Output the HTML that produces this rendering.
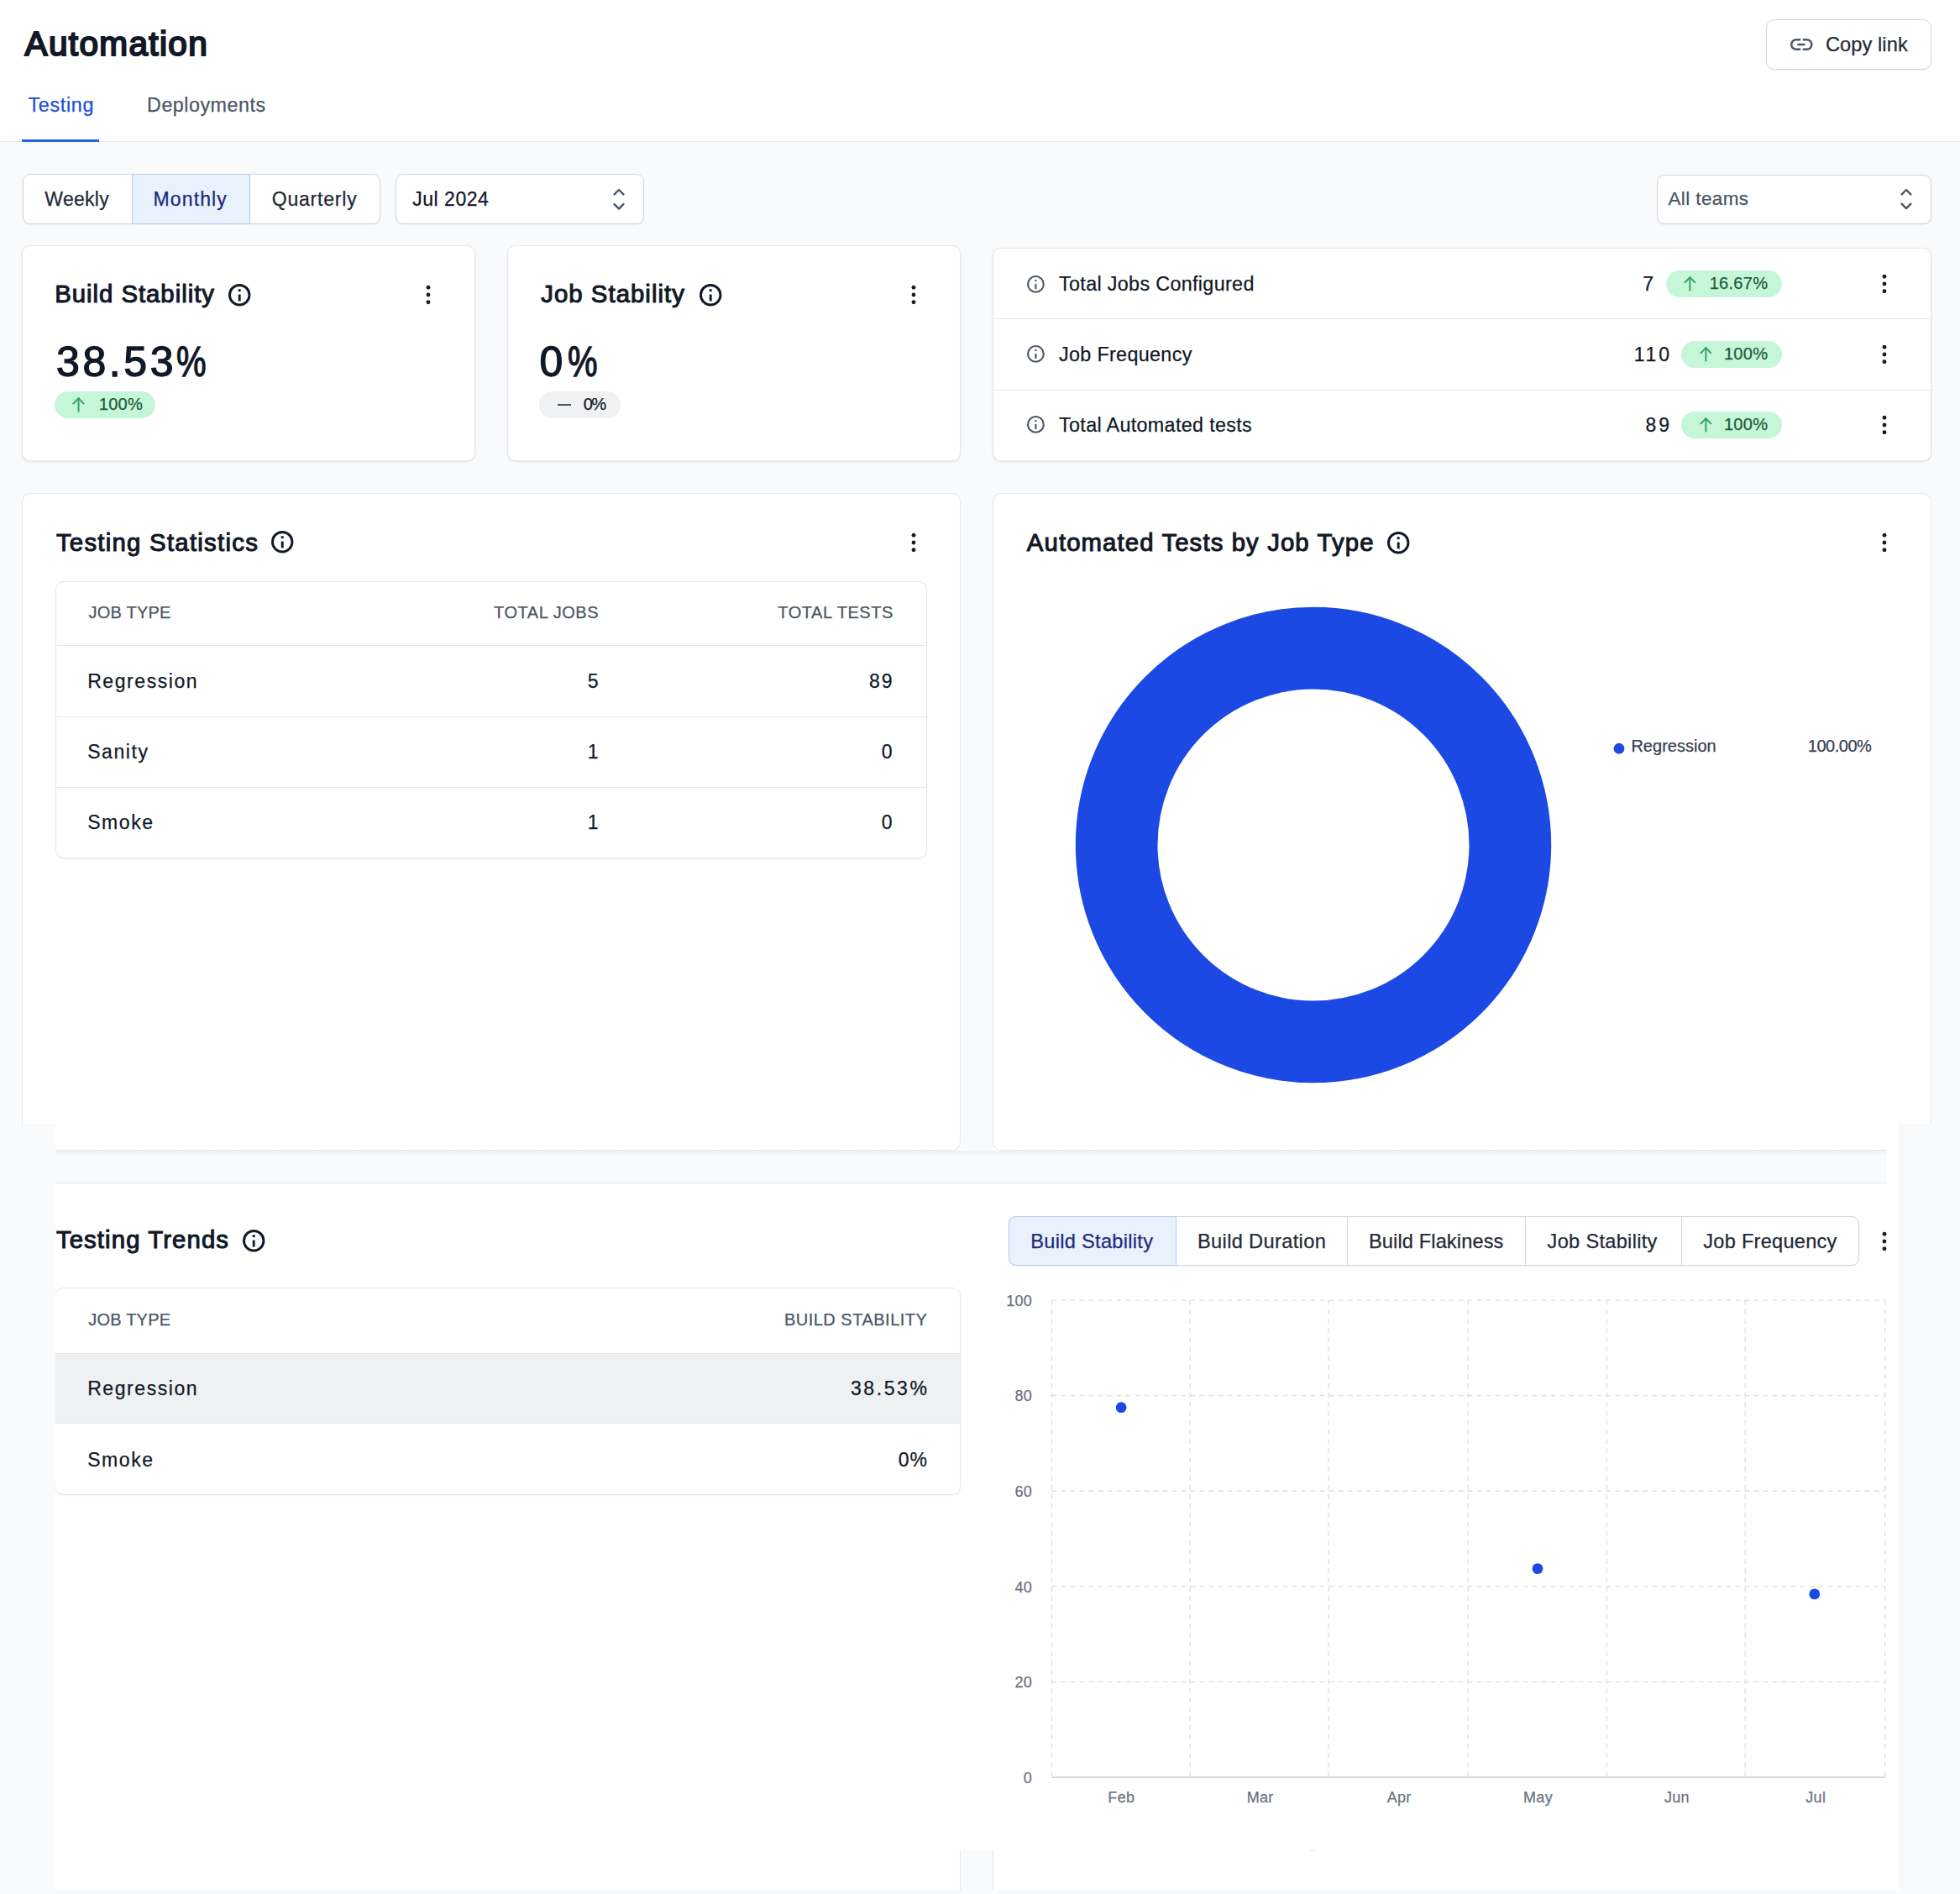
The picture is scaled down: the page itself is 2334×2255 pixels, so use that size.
<!DOCTYPE html>
<html><head><meta charset="utf-8">
<style>
*{box-sizing:border-box;margin:0;padding:0}
html,body{width:2334px;height:2255px;overflow:hidden}
body{position:relative;background:#f9fafb;font-family:"Liberation Sans",sans-serif;color:#111827}
.a{position:absolute}
.t{position:absolute;white-space:nowrap;line-height:1;-webkit-text-stroke:0.25px currentColor}
svg{position:absolute;overflow:visible}
</style></head><body>
<div class="a" style="left:0.00px;top:0.00px;width:2334.00px;height:169.00px;background:#fff;border-bottom:1px solid #e5e7eb"></div>
<div class="t" style="left:29.50px;top:32.22px;font-size:40.50px;letter-spacing:1.38px;color:#111827;-webkit-text-stroke:2.1px currentColor">Automation</div>
<div class="t" style="left:33.40px;top:113.78px;font-size:23.30px;letter-spacing:0.70px;color:#1d4ed8;">Testing</div>
<div class="t" style="left:175.10px;top:113.78px;font-size:23.30px;letter-spacing:0.50px;color:#4b5563;">Deployments</div>
<div class="a" style="left:26.00px;top:166.00px;width:92.00px;height:3.00px;background:#2563eb"></div>
<div class="a" style="left:2103.00px;top:23.00px;width:197.00px;height:59.50px;background:#fff;border:1px solid #d1d5db;border-radius:10px;box-shadow:0 1px 2px rgba(0,0,0,.05)"></div>
<svg style="left:2130px;top:43px" width="30" height="20" viewBox="0 0 30 20"><g fill="none" stroke="#4b5563" stroke-width="2.4"><path d="M14.2 4.2H9a5.8 5.8 0 0 0 0 11.6h5.2"/><path d="M16.8 4.2H21.6a5.8 5.8 0 0 1 0 11.6h-4.8"/><path d="M11.4 10h7.1" stroke-linecap="round"/></g></svg>
<div class="t" style="left:2173.90px;top:41.72px;font-size:23.60px;letter-spacing:0.10px;color:#1f2937;">Copy link</div>
<div class="a" style="left:26.50px;top:207.00px;width:426.00px;height:59.50px;background:#fff;border:1px solid #d1d5db;border-radius:9px;box-shadow:0 1px 2px rgba(0,0,0,.05);"></div>
<div class="a" style="left:157.00px;top:207.00px;width:141.00px;height:59.50px;background:#e9f1fd;border:1px solid #b3cbea"></div>
<div class="t" style="left:53.30px;top:226.13px;font-size:23.00px;letter-spacing:0.30px;color:#1f2937;">Weekly</div>
<div class="t" style="left:182.60px;top:226.13px;font-size:23.00px;letter-spacing:1.10px;color:#1c2a7a;">Monthly</div>
<div class="t" style="left:323.70px;top:226.13px;font-size:23.00px;letter-spacing:0.80px;color:#1f2937;">Quarterly</div>
<div class="a" style="left:471.00px;top:207.00px;width:296.00px;height:59.50px;background:#fff;border:1px solid #d1d5db;border-radius:9px;box-shadow:0 1px 2px rgba(0,0,0,.05);"></div>
<div class="t" style="left:491.30px;top:226.13px;font-size:23.00px;letter-spacing:0.50px;color:#111827;">Jul 2024</div>
<svg style="left:727.00px;top:221.70px" width="20" height="30.60"><g fill="none" stroke="#4b5563" stroke-width="2.4" stroke-linecap="round" stroke-linejoin="round"><path d="M4.60 9.40L10 4L15.40 9.40"/><path d="M4.60 21.20L10 26.60L15.40 21.20"/></g></svg>
<div class="a" style="left:1972.50px;top:207.50px;width:327.50px;height:59.00px;background:#fff;border:1px solid #d1d5db;border-radius:9px;box-shadow:0 1px 2px rgba(0,0,0,.05);"></div>
<div class="t" style="left:1986.40px;top:226.45px;font-size:22.50px;letter-spacing:0.40px;color:#4b5563;">All teams</div>
<svg style="left:2259.80px;top:221.90px" width="20" height="30.10"><g fill="none" stroke="#4b5563" stroke-width="2.4" stroke-linecap="round" stroke-linejoin="round"><path d="M4.60 9.40L10 4L15.40 9.40"/><path d="M4.60 20.70L10 26.10L15.40 20.70"/></g></svg>
<div class="a" style="left:25.80px;top:291.70px;width:540.50px;height:257.10px;background:#fff;border:1px solid #e5e7eb;border-radius:10px;box-shadow:0 1px 3px rgba(0,0,0,.07),0 1px 2px rgba(0,0,0,.04);"></div>
<div class="t" style="left:65.20px;top:335.20px;font-size:29.30px;letter-spacing:0.99px;color:#111827;-webkit-text-stroke:1.05px currentColor">Build Stability</div>
<svg style="left:268.90px;top:334.60px" width="32.40" height="32.40"><circle cx="16.20" cy="16.20" r="11.75" fill="none" stroke="#111827" stroke-width="2.9"/><line x1="16.20" y1="15.54" x2="16.20" y2="23.46" stroke="#111827" stroke-width="2.90"/><rect x="14.75" y="9.21" width="2.90" height="2.90" fill="#111827"/></svg>
<svg style="left:499.60px;top:331.00px" width="20" height="40"><circle cx="10" cy="11.25" r="2.45" fill="#1c1d22"/><circle cx="10" cy="20.00" r="2.45" fill="#1c1d22"/><circle cx="10" cy="28.75" r="2.45" fill="#1c1d22"/></svg>
<div class="t" style="left:67.00px;top:405.98px;font-size:50.00px;letter-spacing:3.60px;color:#111827;-webkit-text-stroke:1.3px currentColor">38.53<span style="display:inline-block;transform:scaleX(0.8);transform-origin:0 0">%</span></div>
<div class="a" style="left:65.40px;top:466.00px;width:120.00px;height:31.50px;background:#c6f6d8;border-radius:16px"></div>
<svg style="left:86.00px;top:473.00px" width="15.00" height="17.50"><g fill="none" stroke="#2f9e62" stroke-width="1.9" stroke-linecap="butt" stroke-linejoin="miter"><path d="M7.50 17.50V0.76"/><path d="M0.95 8.07L7.50 1.14L14.05 8.07"/></g></svg>
<div class="t" style="left:117.80px;top:470.89px;font-size:20.10px;letter-spacing:0.20px;color:#1d5a3c;">100%</div>
<div class="a" style="left:603.90px;top:291.70px;width:539.80px;height:257.10px;background:#fff;border:1px solid #e5e7eb;border-radius:10px;box-shadow:0 1px 3px rgba(0,0,0,.07),0 1px 2px rgba(0,0,0,.04);"></div>
<div class="t" style="left:644.30px;top:335.20px;font-size:29.30px;letter-spacing:1.05px;color:#111827;-webkit-text-stroke:1.05px currentColor">Job Stability</div>
<svg style="left:829.50px;top:334.60px" width="32.40" height="32.40"><circle cx="16.20" cy="16.20" r="11.75" fill="none" stroke="#111827" stroke-width="2.9"/><line x1="16.20" y1="15.54" x2="16.20" y2="23.46" stroke="#111827" stroke-width="2.90"/><rect x="14.75" y="9.21" width="2.90" height="2.90" fill="#111827"/></svg>
<svg style="left:1078.00px;top:331.00px" width="20" height="40"><circle cx="10" cy="11.25" r="2.45" fill="#1c1d22"/><circle cx="10" cy="20.00" r="2.45" fill="#1c1d22"/><circle cx="10" cy="28.75" r="2.45" fill="#1c1d22"/></svg>
<div class="t" style="left:642.50px;top:405.98px;font-size:50.00px;letter-spacing:5.50px;color:#111827;-webkit-text-stroke:1.3px currentColor">0<span style="display:inline-block;transform:scaleX(0.8);transform-origin:0 0">%</span></div>
<div class="a" style="left:642.20px;top:466.00px;width:96.70px;height:31.50px;background:#f0f1f3;border-radius:16px"></div>
<div class="a" style="left:664.20px;top:481.00px;width:15.40px;height:2.00px;background:#4b5563"></div>
<div class="t" style="left:694.80px;top:470.89px;font-size:20.10px;letter-spacing:-1.70px;color:#111827;">0%</div>
<div class="a" style="left:1181.80px;top:294.80px;width:1118.30px;height:254.00px;background:#fff;border:1px solid #e5e7eb;border-radius:10px;box-shadow:0 1px 3px rgba(0,0,0,.07),0 1px 2px rgba(0,0,0,.04);"></div>
<div class="a" style="left:1183.50px;top:379.00px;width:1115.50px;height:1.00px;background:#e5e7eb"></div>
<div class="a" style="left:1183.50px;top:464.00px;width:1115.50px;height:1.00px;background:#e5e7eb"></div>
<svg style="left:1220.30px;top:324.50px" width="26.80" height="26.80"><circle cx="13.40" cy="13.40" r="9.35" fill="none" stroke="#4b5563" stroke-width="2.1"/><line x1="13.40" y1="12.88" x2="13.40" y2="19.12" stroke="#4b5563" stroke-width="2.10"/><rect x="12.35" y="7.98" width="2.10" height="2.10" fill="#4b5563"/></svg>
<div class="t" style="left:1261.00px;top:326.98px;font-size:23.30px;letter-spacing:0.35px;color:#111827;">Total Jobs Configured</div>
<div class="t" style="left:471.90px;width:1500px;text-align:right;top:327.23px;font-size:23.00px;letter-spacing:2.80px;color:#111827;">7</div>
<div class="a" style="left:1983.90px;top:322.10px;width:138.20px;height:31.60px;background:#c6f6d8;border-radius:16px"></div>
<svg style="left:2005.30px;top:329.10px" width="14.80" height="17.40"><g fill="none" stroke="#2f9e62" stroke-width="1.9" stroke-linecap="butt" stroke-linejoin="miter"><path d="M7.40 17.40V0.76"/><path d="M0.95 7.97L7.40 1.14L13.85 7.97"/></g></svg>
<div class="t" style="left:605.35px;width:1500px;text-align:right;top:326.99px;font-size:20.10px;letter-spacing:0.25px;color:#1d5a3c;">16.67%</div>
<svg style="left:2234.00px;top:317.90px" width="20" height="40"><circle cx="10" cy="11.25" r="2.45" fill="#1c1d22"/><circle cx="10" cy="20.00" r="2.45" fill="#1c1d22"/><circle cx="10" cy="28.75" r="2.45" fill="#1c1d22"/></svg>
<svg style="left:1220.30px;top:408.40px" width="26.80" height="26.80"><circle cx="13.40" cy="13.40" r="9.35" fill="none" stroke="#4b5563" stroke-width="2.1"/><line x1="13.40" y1="12.88" x2="13.40" y2="19.12" stroke="#4b5563" stroke-width="2.10"/><rect x="12.35" y="7.98" width="2.10" height="2.10" fill="#4b5563"/></svg>
<div class="t" style="left:1261.00px;top:410.88px;font-size:23.30px;letter-spacing:0.35px;color:#111827;">Job Frequency</div>
<div class="t" style="left:490.80px;width:1500px;text-align:right;top:411.13px;font-size:23.00px;letter-spacing:2.80px;color:#111827;">110</div>
<div class="a" style="left:2002.30px;top:406.00px;width:119.80px;height:31.60px;background:#c6f6d8;border-radius:16px"></div>
<svg style="left:2023.70px;top:413.00px" width="14.80" height="17.40"><g fill="none" stroke="#2f9e62" stroke-width="1.9" stroke-linecap="butt" stroke-linejoin="miter"><path d="M7.40 17.40V0.76"/><path d="M0.95 7.97L7.40 1.14L13.85 7.97"/></g></svg>
<div class="t" style="left:605.35px;width:1500px;text-align:right;top:410.89px;font-size:20.10px;letter-spacing:0.25px;color:#1d5a3c;">100%</div>
<svg style="left:2234.00px;top:401.80px" width="20" height="40"><circle cx="10" cy="11.25" r="2.45" fill="#1c1d22"/><circle cx="10" cy="20.00" r="2.45" fill="#1c1d22"/><circle cx="10" cy="28.75" r="2.45" fill="#1c1d22"/></svg>
<svg style="left:1220.30px;top:492.40px" width="26.80" height="26.80"><circle cx="13.40" cy="13.40" r="9.35" fill="none" stroke="#4b5563" stroke-width="2.1"/><line x1="13.40" y1="12.88" x2="13.40" y2="19.12" stroke="#4b5563" stroke-width="2.10"/><rect x="12.35" y="7.98" width="2.10" height="2.10" fill="#4b5563"/></svg>
<div class="t" style="left:1261.00px;top:494.88px;font-size:23.30px;letter-spacing:0.35px;color:#111827;">Total Automated tests</div>
<div class="t" style="left:490.80px;width:1500px;text-align:right;top:495.13px;font-size:23.00px;letter-spacing:2.80px;color:#111827;">89</div>
<div class="a" style="left:2002.30px;top:490.00px;width:119.80px;height:31.60px;background:#c6f6d8;border-radius:16px"></div>
<svg style="left:2023.70px;top:497.00px" width="14.80" height="17.40"><g fill="none" stroke="#2f9e62" stroke-width="1.9" stroke-linecap="butt" stroke-linejoin="miter"><path d="M7.40 17.40V0.76"/><path d="M0.95 7.97L7.40 1.14L13.85 7.97"/></g></svg>
<div class="t" style="left:605.35px;width:1500px;text-align:right;top:494.89px;font-size:20.10px;letter-spacing:0.25px;color:#1d5a3c;">100%</div>
<svg style="left:2234.00px;top:485.80px" width="20" height="40"><circle cx="10" cy="11.25" r="2.45" fill="#1c1d22"/><circle cx="10" cy="20.00" r="2.45" fill="#1c1d22"/><circle cx="10" cy="28.75" r="2.45" fill="#1c1d22"/></svg>
<div class="a" style="left:25.60px;top:587.00px;width:1118.30px;height:751.00px;background:#fff;border:1px solid #e5e7eb;border-radius:10px;box-shadow:0 1px 3px rgba(0,0,0,.07),0 1px 2px rgba(0,0,0,.04);border-bottom:none;border-bottom-left-radius:0;border-bottom-right-radius:0;box-shadow:none"></div>
<div class="t" style="left:66.90px;top:630.50px;font-size:29.30px;letter-spacing:1.28px;color:#111827;-webkit-text-stroke:1.05px currentColor">Testing Statistics</div>
<svg style="left:319.80px;top:629.30px" width="32.40" height="32.40"><circle cx="16.20" cy="16.20" r="11.75" fill="none" stroke="#111827" stroke-width="2.9"/><line x1="16.20" y1="15.54" x2="16.20" y2="23.46" stroke="#111827" stroke-width="2.90"/><rect x="14.75" y="9.21" width="2.90" height="2.90" fill="#111827"/></svg>
<svg style="left:1078.00px;top:626.00px" width="20" height="40"><circle cx="10" cy="11.25" r="2.45" fill="#1c1d22"/><circle cx="10" cy="20.00" r="2.45" fill="#1c1d22"/><circle cx="10" cy="28.75" r="2.45" fill="#1c1d22"/></svg>
<div class="a" style="left:65.70px;top:691.60px;width:1038.00px;height:330.00px;background:#fff;border:1px solid #e5e7eb;border-radius:10px;box-shadow:0 1px 2px rgba(0,0,0,.05)"></div>
<div class="a" style="left:66.70px;top:768.00px;width:1036.00px;height:1.00px;background:#e5e7eb"></div>
<div class="a" style="left:66.70px;top:853.20px;width:1036.00px;height:1.00px;background:#e5e7eb"></div>
<div class="a" style="left:66.70px;top:937.20px;width:1036.00px;height:1.00px;background:#e5e7eb"></div>
<div class="t" style="left:105.60px;top:718.87px;font-size:20.00px;letter-spacing:0.20px;color:#4b5563;">JOB TYPE</div>
<div class="t" style="left:-786.85px;width:1500px;text-align:right;top:718.87px;font-size:20.00px;letter-spacing:0.55px;color:#4b5563;">TOTAL JOBS</div>
<div class="t" style="left:-436.15px;width:1500px;text-align:right;top:718.87px;font-size:20.00px;letter-spacing:0.55px;color:#4b5563;">TOTAL TESTS</div>
<div class="t" style="left:104.20px;top:800.03px;font-size:23.00px;letter-spacing:1.57px;color:#111827;">Regression</div>
<div class="t" style="left:-785.40px;width:1500px;text-align:right;top:800.03px;font-size:23.00px;letter-spacing:2.00px;color:#111827;">5</div>
<div class="t" style="left:-435.50px;width:1500px;text-align:right;top:800.03px;font-size:23.00px;letter-spacing:2.00px;color:#111827;">89</div>
<div class="t" style="left:104.20px;top:884.23px;font-size:23.00px;letter-spacing:1.57px;color:#111827;">Sanity</div>
<div class="t" style="left:-785.40px;width:1500px;text-align:right;top:884.23px;font-size:23.00px;letter-spacing:2.00px;color:#111827;">1</div>
<div class="t" style="left:-435.50px;width:1500px;text-align:right;top:884.23px;font-size:23.00px;letter-spacing:2.00px;color:#111827;">0</div>
<div class="t" style="left:104.20px;top:968.13px;font-size:23.00px;letter-spacing:1.57px;color:#111827;">Smoke</div>
<div class="t" style="left:-785.40px;width:1500px;text-align:right;top:968.13px;font-size:23.00px;letter-spacing:2.00px;color:#111827;">1</div>
<div class="t" style="left:-435.50px;width:1500px;text-align:right;top:968.13px;font-size:23.00px;letter-spacing:2.00px;color:#111827;">0</div>
<div class="a" style="left:1182.20px;top:587.30px;width:1117.90px;height:750.70px;background:#fff;border:1px solid #e5e7eb;border-radius:10px;box-shadow:0 1px 3px rgba(0,0,0,.07),0 1px 2px rgba(0,0,0,.04);border-bottom:none;border-bottom-left-radius:0;border-bottom-right-radius:0;box-shadow:none"></div>
<div class="t" style="left:1222.80px;top:630.50px;font-size:29.30px;letter-spacing:1.13px;color:#111827;-webkit-text-stroke:1.05px currentColor">Automated Tests by Job Type</div>
<svg style="left:1648.80px;top:629.60px" width="32.40" height="32.40"><circle cx="16.20" cy="16.20" r="11.75" fill="none" stroke="#111827" stroke-width="2.9"/><line x1="16.20" y1="15.54" x2="16.20" y2="23.46" stroke="#111827" stroke-width="2.90"/><rect x="14.75" y="9.21" width="2.90" height="2.90" fill="#111827"/></svg>
<svg style="left:2233.80px;top:626.00px" width="20" height="40"><circle cx="10" cy="11.25" r="2.45" fill="#1c1d22"/><circle cx="10" cy="20.00" r="2.45" fill="#1c1d22"/><circle cx="10" cy="28.75" r="2.45" fill="#1c1d22"/></svg>
<svg style="left:1263.8px;top:706.4px" width="600" height="600"><circle cx="300" cy="300" r="234.35" fill="none" stroke="#1c49e4" stroke-width="97.7"/></svg>
<svg style="left:1918px;top:881px" width="20" height="20"><circle cx="10" cy="10.2" r="6.4" fill="#1c49e4"/></svg>
<div class="t" style="left:1942.40px;top:877.97px;font-size:20.00px;letter-spacing:0.02px;color:#374151;">Regression</div>
<div class="t" style="left:728.30px;width:1500px;text-align:right;top:877.97px;font-size:20.00px;letter-spacing:-0.50px;color:#374151;">100.00%</div>
<div class="a" style="left:0.00px;top:1338.00px;width:65.70px;height:917.00px;background:#f9fafb"></div>
<div class="a" style="left:65.70px;top:1338.00px;width:2195.30px;height:913.00px;background:#fff"></div>
<div class="a" style="left:65.70px;top:1338.00px;width:1078.20px;height:31.80px;background:#fff;border-right:1px solid #e5e7eb;border-bottom:1px solid #e5e7eb;border-bottom-right-radius:10px"></div>
<div class="a" style="left:1143.90px;top:1338.00px;width:38.30px;height:31.80px;background:#f9fafb"></div>
<div class="a" style="left:1182.20px;top:1338.00px;width:1064.80px;height:31.80px;background:#fff;border-left:1px solid #e5e7eb;border-bottom:1px solid #e5e7eb;border-bottom-left-radius:10px"></div>
<div class="a" style="left:65.70px;top:1369.80px;width:2181.30px;height:39.10px;background:#f9fafb;border-bottom:1px solid #e5e7eb"></div>
<div class="a" style="left:65.7px;top:1369.8px;width:2181px;height:6px;background:linear-gradient(rgba(0,0,0,.035),rgba(0,0,0,0))"></div>
<div class="t" style="left:66.90px;top:1461.30px;font-size:29.30px;letter-spacing:1.12px;color:#111827;-webkit-text-stroke:1.05px currentColor">Testing Trends</div>
<svg style="left:285.50px;top:1461.30px" width="32.40" height="32.40"><circle cx="16.20" cy="16.20" r="11.75" fill="none" stroke="#111827" stroke-width="2.9"/><line x1="16.20" y1="15.54" x2="16.20" y2="23.46" stroke="#111827" stroke-width="2.90"/><rect x="14.75" y="9.21" width="2.90" height="2.90" fill="#111827"/></svg>
<div class="a" style="left:64.60px;top:1533.00px;width:1079.70px;height:247.00px;background:#fff;border:1px solid #e5e7eb;border-radius:10px;box-shadow:0 1px 2px rgba(0,0,0,.05)"></div>
<div class="a" style="left:66.00px;top:1611.00px;width:1077.30px;height:84.00px;background:#eff0f2;border-top:1px solid #e5e7eb;border-bottom:1px solid #e5e7eb"></div>
<div class="t" style="left:105.30px;top:1560.97px;font-size:20.00px;letter-spacing:0.20px;color:#4b5563;">JOB TYPE</div>
<div class="t" style="left:-395.60px;width:1500px;text-align:right;top:1560.97px;font-size:20.00px;letter-spacing:0.50px;color:#4b5563;">BUILD STABILITY</div>
<div class="t" style="left:104.20px;top:1642.23px;font-size:23.00px;letter-spacing:1.57px;color:#111827;">Regression</div>
<div class="t" style="left:-393.52px;width:1500px;text-align:right;top:1642.23px;font-size:23.00px;letter-spacing:2.58px;color:#111827;">38.53%</div>
<div class="t" style="left:104.20px;top:1727.23px;font-size:23.00px;letter-spacing:1.57px;color:#111827;">Smoke</div>
<div class="t" style="left:-395.10px;width:1500px;text-align:right;top:1727.23px;font-size:23.00px;letter-spacing:1.00px;color:#111827;">0%</div>
<div class="a" style="left:1201.40px;top:1448.30px;width:1012.90px;height:58.30px;background:#fff;border:1px solid #d1d5db;border-radius:9px;box-shadow:0 1px 2px rgba(0,0,0,.05)"></div>
<div class="a" style="left:1201.40px;top:1448.30px;width:200.10px;height:58.30px;background:#e9f1fd;border:1px solid #b3cbea;border-radius:9px 0 0 9px"></div>
<div class="a" style="left:1604.20px;top:1449.30px;width:1.00px;height:56.30px;background:#d1d5db"></div>
<div class="a" style="left:1816.10px;top:1449.30px;width:1.00px;height:56.30px;background:#d1d5db"></div>
<div class="a" style="left:2002.40px;top:1449.30px;width:1.00px;height:56.30px;background:#d1d5db"></div>
<div class="t" style="left:1227.20px;top:1467.12px;font-size:23.60px;letter-spacing:0.30px;color:#1c2a7a;">Build Stability</div>
<div class="t" style="left:1426.00px;top:1467.12px;font-size:23.60px;letter-spacing:0.35px;color:#1f2937;">Build Duration</div>
<div class="t" style="left:1630.00px;top:1467.12px;font-size:23.60px;letter-spacing:0.12px;color:#1f2937;">Build Flakiness</div>
<div class="t" style="left:1842.60px;top:1467.12px;font-size:23.60px;letter-spacing:0.30px;color:#1f2937;">Job Stability</div>
<div class="t" style="left:2028.30px;top:1467.12px;font-size:23.60px;letter-spacing:0.25px;color:#1f2937;">Job Frequency</div>
<svg style="left:2234.00px;top:1458.00px" width="20" height="40"><circle cx="10" cy="11.25" r="2.45" fill="#1c1d22"/><circle cx="10" cy="20.00" r="2.45" fill="#1c1d22"/><circle cx="10" cy="28.75" r="2.45" fill="#1c1d22"/></svg>
<svg style="left:0;top:0" width="2334" height="2255"><g stroke="#dddddf" stroke-width="1.3" stroke-dasharray="6 5" fill="none"><line x1="1252.50" y1="1548.10" x2="1252.50" y2="2116.00"/><line x1="1417.20" y1="1548.10" x2="1417.20" y2="2116.00"/><line x1="1582.20" y1="1548.10" x2="1582.20" y2="2116.00"/><line x1="1748.20" y1="1548.10" x2="1748.20" y2="2116.00"/><line x1="1913.40" y1="1548.10" x2="1913.40" y2="2116.00"/><line x1="2078.20" y1="1548.10" x2="2078.20" y2="2116.00"/><line x1="2244.80" y1="1548.10" x2="2244.80" y2="2116.00"/><line x1="1252.50" y1="1548.10" x2="2244.80" y2="1548.10"/><line x1="1252.50" y1="1661.68" x2="2244.80" y2="1661.68"/><line x1="1252.50" y1="1775.26" x2="2244.80" y2="1775.26"/><line x1="1252.50" y1="1888.84" x2="2244.80" y2="1888.84"/><line x1="1252.50" y1="2002.42" x2="2244.80" y2="2002.42"/></g><line x1="1252.50" y1="2116.00" x2="2244.80" y2="2116.00" stroke="#cdcdd0" stroke-width="1.6"/><circle cx="1335.1" cy="1675.7" r="6.4" fill="#1c49e4"/><circle cx="1831" cy="1867.6" r="6.4" fill="#1c49e4"/><circle cx="2160.8" cy="1897.9" r="6.4" fill="#1c49e4"/></svg>
<div class="t" style="left:-270.90px;width:1500px;text-align:right;top:1539.76px;font-size:18.00px;letter-spacing:0.30px;color:#6b7280;">100</div>
<div class="t" style="left:-270.90px;width:1500px;text-align:right;top:1653.34px;font-size:18.00px;letter-spacing:0.30px;color:#6b7280;">80</div>
<div class="t" style="left:-270.90px;width:1500px;text-align:right;top:1766.92px;font-size:18.00px;letter-spacing:0.30px;color:#6b7280;">60</div>
<div class="t" style="left:-270.90px;width:1500px;text-align:right;top:1880.50px;font-size:18.00px;letter-spacing:0.30px;color:#6b7280;">40</div>
<div class="t" style="left:-270.90px;width:1500px;text-align:right;top:1994.08px;font-size:18.00px;letter-spacing:0.30px;color:#6b7280;">20</div>
<div class="t" style="left:-270.90px;width:1500px;text-align:right;top:2107.66px;font-size:18.00px;letter-spacing:0.30px;color:#6b7280;">0</div>
<div class="t" style="left:585.34px;width:1500px;text-align:center;top:2130.96px;font-size:18.00px;letter-spacing:0.30px;color:#6b7280;">Feb</div>
<div class="t" style="left:750.73px;width:1500px;text-align:center;top:2130.96px;font-size:18.00px;letter-spacing:0.30px;color:#6b7280;">Mar</div>
<div class="t" style="left:916.11px;width:1500px;text-align:center;top:2130.96px;font-size:18.00px;letter-spacing:0.30px;color:#6b7280;">Apr</div>
<div class="t" style="left:1081.49px;width:1500px;text-align:center;top:2130.96px;font-size:18.00px;letter-spacing:0.30px;color:#6b7280;">May</div>
<div class="t" style="left:1246.88px;width:1500px;text-align:center;top:2130.96px;font-size:18.00px;letter-spacing:0.30px;color:#6b7280;">Jun</div>
<div class="t" style="left:1412.26px;width:1500px;text-align:center;top:2130.96px;font-size:18.00px;letter-spacing:0.30px;color:#6b7280;">Jul</div>
<div class="a" style="left:1143.00px;top:2203.00px;width:40.00px;height:48.00px;background:#f9fafb;border-left:1px solid #e5e7eb;border-right:1px solid #e5e7eb"></div>
<div class="a" style="left:0.00px;top:2251.00px;width:2334.00px;height:4.00px;background:#f9fafb"></div>
<div class="a" style="left:0.00px;top:1338.00px;width:65.70px;height:917.00px;background:#f9fafb"></div>
<div class="a" style="left:1560.00px;top:2202.50px;width:7.00px;height:1.00px;background:#e5e7eb"></div>
<!--REST-->
</body></html>
